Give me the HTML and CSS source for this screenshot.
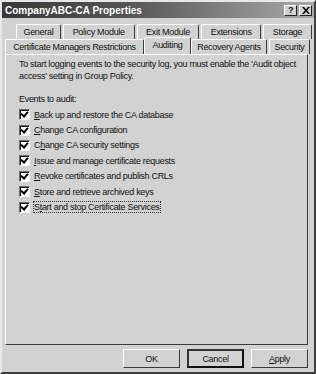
FILE: index.html
```html
<!DOCTYPE html>
<html lang="en">
<head>
    <meta charset="UTF-8">
    <title>CompanyABC-CA Properties</title>
    <link rel="stylesheet" href="styles.css">
</head>
<body>
    <div class="window">
        <div class="titlebar">
            <span class="title">CompanyABC-CA Properties</span>
            <div class="caption-buttons">
                <span class="cap-btn">?</span>
                <span class="cap-btn close">
                    <svg width="8" height="7" viewBox="0 0 8 7"><path d="M0 0h2l2 2.5L6 0h2L5 3.5 8 7H6L4 4.5 2 7H0l3-3.5z" fill="#000"/></svg>
                </span>
            </div>
        </div>

        <div class="tabs">
            <div class="tab-row back">
                <span class="tab w-general">General</span>
                <span class="tab w-policy">Policy Module</span>
                <span class="tab w-exit">Exit Module</span>
                <span class="tab w-ext">Extensions</span>
                <span class="tab w-storage">Storage</span>
            </div>
            <div class="tab-row front">
                <span class="tab w-cmr">Certificate Managers Restrictions</span>
                <span class="tab w-audit active">Auditing</span>
                <span class="tab w-recovery">Recovery Agents</span>
                <span class="tab w-security">Security</span>
            </div>
        </div>

        <div class="panel">
            <p class="intro">To start logging events to the security log, you must enable the 'Audit object access' setting in Group Policy.</p>
            <p class="label">Events to audit:</p>
            <ul class="checks">
                <li><span class="box"></span><span><u>B</u>ack up and restore the CA database</span></li>
                <li><span class="box"></span><span><u>C</u>hange CA configuration</span></li>
                <li><span class="box"></span><span>C<u>h</u>ange CA security settings</span></li>
                <li><span class="box"></span><span><u>I</u>ssue and manage certificate requests</span></li>
                <li><span class="box"></span><span><u>R</u>evoke certificates and publish CRLs</span></li>
                <li><span class="box"></span><span><u>S</u>tore and retrieve archived keys</span></li>
                <li><span class="box"></span><span class="focus">S<u>t</u>art and stop Certificate Services</span></li>
            </ul>
        </div>

        <div class="buttons">
            <button class="btn">OK</button>
            <button class="btn default">Cancel</button>
            <button class="btn"><u>A</u>pply</button>
        </div>
    </div>
</body>
</html>
```

FILE: styles.css
```css
body {
    margin: 0;
    background: #d2d2d2;
    font-family: "Liberation Sans", Arial, sans-serif;
    font-size: 9px;
    letter-spacing: -0.3px;
    color: #111;
}
.window {
    width: 316px;
    height: 374px;
    box-sizing: border-box;
    background: #d2d2d2;
    border: 2px solid;
    border-color: #e8e8e8 #404040 #404040 #e8e8e8;
    display: flex;
    flex-direction: column;
}
.titlebar {
    height: 16px;
    background: linear-gradient(to right, #383838, #555 40%, #aaa);
    display: flex;
    align-items: center;
    justify-content: space-between;
    padding: 0 2px 0 3px;
}
.title {
    color: #fff;
    font-weight: bold;
    font-size: 10px;
    letter-spacing: 0;
}
.caption-buttons {
    display: flex;
    gap: 2px;
}
.cap-btn {
    width: 13px;
    height: 11px;
    background: #d2d2d2;
    border: 1px solid;
    border-color: #fff #222 #222 #fff;
    box-sizing: border-box;
    display: flex;
    align-items: center;
    justify-content: center;
    font-weight: bold;
    font-size: 9px;
    line-height: 1;
}
.tabs {
    margin-top: 6px;
    padding-left: 3px;
}
.tab-row {
    display: flex;
    height: 15px;
}
.tab-row.back {
    padding-left: 11px;
}
.tab {
    box-sizing: border-box;
    height: 15px;
    border: 1px solid;
    border-bottom: none;
    border-color: #fff #3a3a3a #3a3a3a #fff;
    border-radius: 2px 2px 0 0;
    display: flex;
    align-items: center;
    justify-content: center;
    white-space: nowrap;
    margin-right: 2px;
}
.tab.active {
    height: 17px;
    margin-top: -2px;
    margin-left: -2px;
    margin-right: 0;
    padding-bottom: 2px;
    position: relative;
    z-index: 1;
    background: #d2d2d2;
}
.w-general { width: 45px; }
.w-policy { width: 72px; }
.w-exit { width: 63px; }
.w-ext { width: 60px; }
.w-storage { width: 49px; }
.w-cmr { width: 139px; }
.w-audit { width: 47px; }
.w-recovery { width: 76px; }
.w-security { width: 41px; }
.panel {
    margin-left: 3px;
    width: 303px;
    height: 291px;
    box-sizing: border-box;
    border: 1px solid;
    border-color: #fff #3a3a3a #3a3a3a #fff;
    padding: 3px 6px 0 13px;
}
.intro {
    margin: 0;
    line-height: 12px;
}
.label {
    margin: 11px 0 2px;
    line-height: 12px;
}
.checks {
    list-style: none;
    margin: 0;
    padding: 0;
}
.checks li {
    display: flex;
    align-items: center;
    height: 15.4px;
}
.box {
    width: 11px;
    height: 11px;
    box-sizing: border-box;
    border: 1px solid;
    border-color: #6a6a6a #f4f4f4 #f4f4f4 #6a6a6a;
    box-shadow: inset 1px 1px 0 #1c1c1c;
    background: #fff;
    margin-right: 4px;
    position: relative;
}
.box::after {
    content: "";
    position: absolute;
    left: 2px;
    top: 0;
    width: 3px;
    height: 5px;
    border: solid #000;
    border-width: 0 2px 2px 0;
    transform: rotate(40deg);
}
.focus {
    outline: 1px dotted #333;
}
.buttons {
    display: flex;
    justify-content: flex-end;
    gap: 7px;
    padding: 4px 6px 0 0;
}
.btn {
    width: 57px;
    height: 19px;
    box-sizing: border-box;
    background: #d2d2d2;
    border: 1px solid;
    border-color: #fff #3a3a3a #3a3a3a #fff;
    font-family: "Liberation Sans", Arial, sans-serif;
    font-size: 9px;
    letter-spacing: -0.3px;
    color: #111;
    padding: 0;
}
.btn.default {
    border: 2px solid #111;
    border-top-color: #333;
    border-left-color: #333;
}
```
